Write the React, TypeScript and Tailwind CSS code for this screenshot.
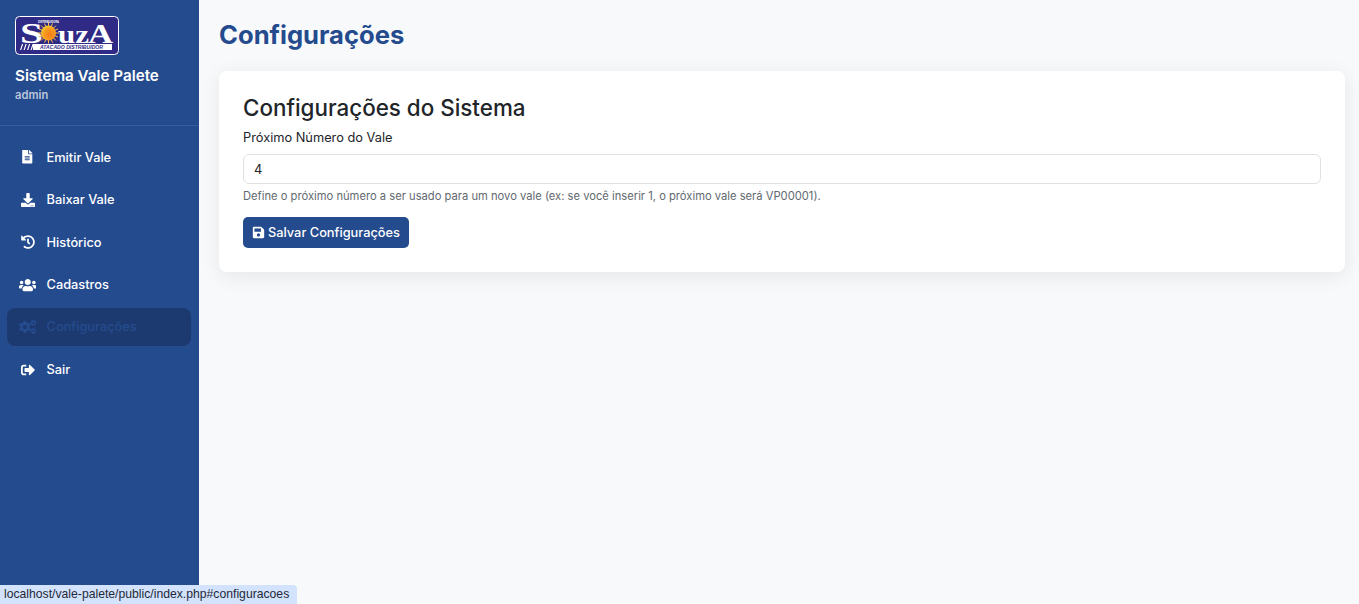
import { FaCogs, FaDownload, FaFileAlt, FaHistory, FaSave, FaSignOutAlt, FaUsers } from 'react-icons/fa';

const menu = [
  { label: 'Emitir Vale', icon: FaFileAlt, size: 'h-[13.500px] w-[10.500px] shrink-0' },
  { label: 'Baixar Vale', icon: FaDownload, size: 'h-[14px] w-[14px] shrink-0' },
  { label: 'Histórico', icon: FaHistory, size: 'h-[14px] w-[14px] shrink-0' },
  { label: 'Cadastros', icon: FaUsers, size: 'h-[14px] w-[17.500px] shrink-0' },
  { label: 'Configurações', icon: FaCogs, size: 'h-[14px] w-[17.500px] shrink-0', active: true },
  { label: 'Sair', icon: FaSignOutAlt, size: 'h-[14px] w-[14px] shrink-0' },
];

function Logo() {
  const serif = "'Liberation Serif', serif";
  return (
    <svg width="104" height="39" viewBox="0 0 104 39" className="block">
      <defs>
        <radialGradient id="sun" cx="0.6" cy="0.6" r="0.65">
          <stop offset="0" stopColor="#f47c1c" />
          <stop offset="0.6" stopColor="#f79a1b" />
          <stop offset="1" stopColor="#f6cf3c" />
        </radialGradient>
      </defs>
      <rect x="0.5" y="0.5" width="103" height="38" rx="4" fill="#2f2a85" stroke="#ffffff" />
      <text x="5" y="26.500" fontFamily={serif} fontWeight="700" fontSize="29" fill="#ffffff" textLength="23" lengthAdjust="spacingAndGlyphs">S</text>
      <g stroke="#f4c04a" strokeWidth="1">
        <path d="M33.500 6.500v21M23 17h21M26 9.500l15 15M41 9.500l-15 15M29.500 7.500l8 19M37.500 7.500l-8 19M24 13l19 8M43 13l-19 8" />
      </g>
      <circle cx="33.500" cy="17" r="7.500" fill="url(#sun)" />
      <text x="23" y="6.500" fontFamily="'Liberation Sans', sans-serif" fontWeight="700" fontSize="3" fill="#ffffff" textLength="21" lengthAdjust="spacingAndGlyphs">DISTRIBUIDORA</text>
      <text x="43" y="26.500" fontFamily={serif} fontWeight="700" fontSize="25" fill="#ffffff" textLength="31" lengthAdjust="spacingAndGlyphs">uz</text>
      <text x="73" y="26.500" fontFamily={serif} fontWeight="700" fontSize="28" fill="#ffffff" textLength="25" lengthAdjust="spacingAndGlyphs">A</text>
      <rect x="18" y="28" width="79" height="6" fill="#ffffff" />
      <path d="M5 34l2-6h1.200l-2 6zM8.500 34l2-6h1.200l-2 6zM12 34l2-6h1.200l-2 6zM15.500 34l2-6h1.200l-2 6z" fill="#ffffff" />
      <text x="25" y="33" fontFamily="'Liberation Sans', sans-serif" fontWeight="700" fontStyle="italic" fontSize="4.500" fill="#2f2a85" textLength="63" lengthAdjust="spacingAndGlyphs">ATACADO DISTRIBUIDOR</text>
    </svg>
  );
}

export default function App() {
  return (
    <div className="relative flex h-[604px] w-[1359px] overflow-hidden bg-[#f8f9fa] font-['Inter',sans-serif] text-[#212529]">
      <aside className="flex w-[199px] shrink-0 flex-col bg-[#244b8e] text-white">
        <div className="border-b border-white/10 px-[15px] pt-[16px] pb-[22px]">
          <Logo />
          <h2 className="mt-[9px] text-[15.200px] leading-[23px] font-semibold">Sistema Vale Palete</h2>
          <div className="mt-[1px] text-[11.200px] leading-[15px] font-semibold text-white/70">admin</div>
        </div>
        <nav className="flex flex-col gap-[4.200px] pr-[8px] pl-[7px] pt-[12px]">
          {menu.map(({ label, icon: Icon, size, active }) => (
            <a
              key={label}
              href="#"
              className={
                active
                  ? 'flex h-[38.300px] items-center rounded-[8px] bg-[#1d3a70] pl-[12px] text-[12.800px] font-medium text-[#244b8e]'
                  : 'flex h-[38.300px] items-center rounded-[8px] pl-[12px] text-[12.800px] font-medium text-white'
              }
            >
              <span className="flex w-[17px] justify-center">
                <Icon className={size} />
              </span>
              <span className="ml-[10.500px]">{label}</span>
            </a>
          ))}
        </nav>
      </aside>
      <main className="min-w-0 flex-1 px-[20px] pt-[18px]">
        <h1 className="text-[25.600px] leading-[34px] font-bold text-[#244b8e]">Configurações</h1>
        <section className="mt-[19px] h-[201px] w-[1126px] rounded-[8px] bg-white px-[24px] pt-[23px] shadow-[0_4px_20px_rgba(0,0,0,0.08)]">
          <h3 className="text-[22.400px] leading-[28px] font-medium text-[#212529]">Configurações do Sistema</h3>
          <label className="mt-[6px] block text-[12.800px] leading-[19px] text-[#212529]">Próximo Número do Vale</label>
          <input
            readOnly
            value="4"
            className="mt-[7px] block h-[30px] w-full rounded-[6px] border border-[#dee2e6] bg-white px-[10px] text-[12.800px] text-[#212529] outline-none"
          />
          <p className="mt-[4px] text-[11.200px] leading-[16px] text-[#626970]">
            Define o próximo número a ser usado para um novo vale (ex: se você inserir 1, o próximo vale será VP00001).
          </p>
          <button className="mt-[13px] flex h-[31px] w-[166px] items-center justify-center gap-[3px] rounded-[5px] bg-[#244b8e] text-[12.800px] font-medium text-white">
            <FaSave className="h-[13px] w-[13px]" />
            Salvar Configurações
          </button>
        </section>
      </main>
      <div className="absolute bottom-0 left-0 flex h-[19px] w-[297px] items-center rounded-tr-[4px] bg-[#d3e3fd] pl-[4px] font-['Liberation_Sans',sans-serif] text-[12.200px] text-[#1f2937]">
        localhost/vale-palete/public/index.php#configuracoes
      </div>
    </div>
  );
}
